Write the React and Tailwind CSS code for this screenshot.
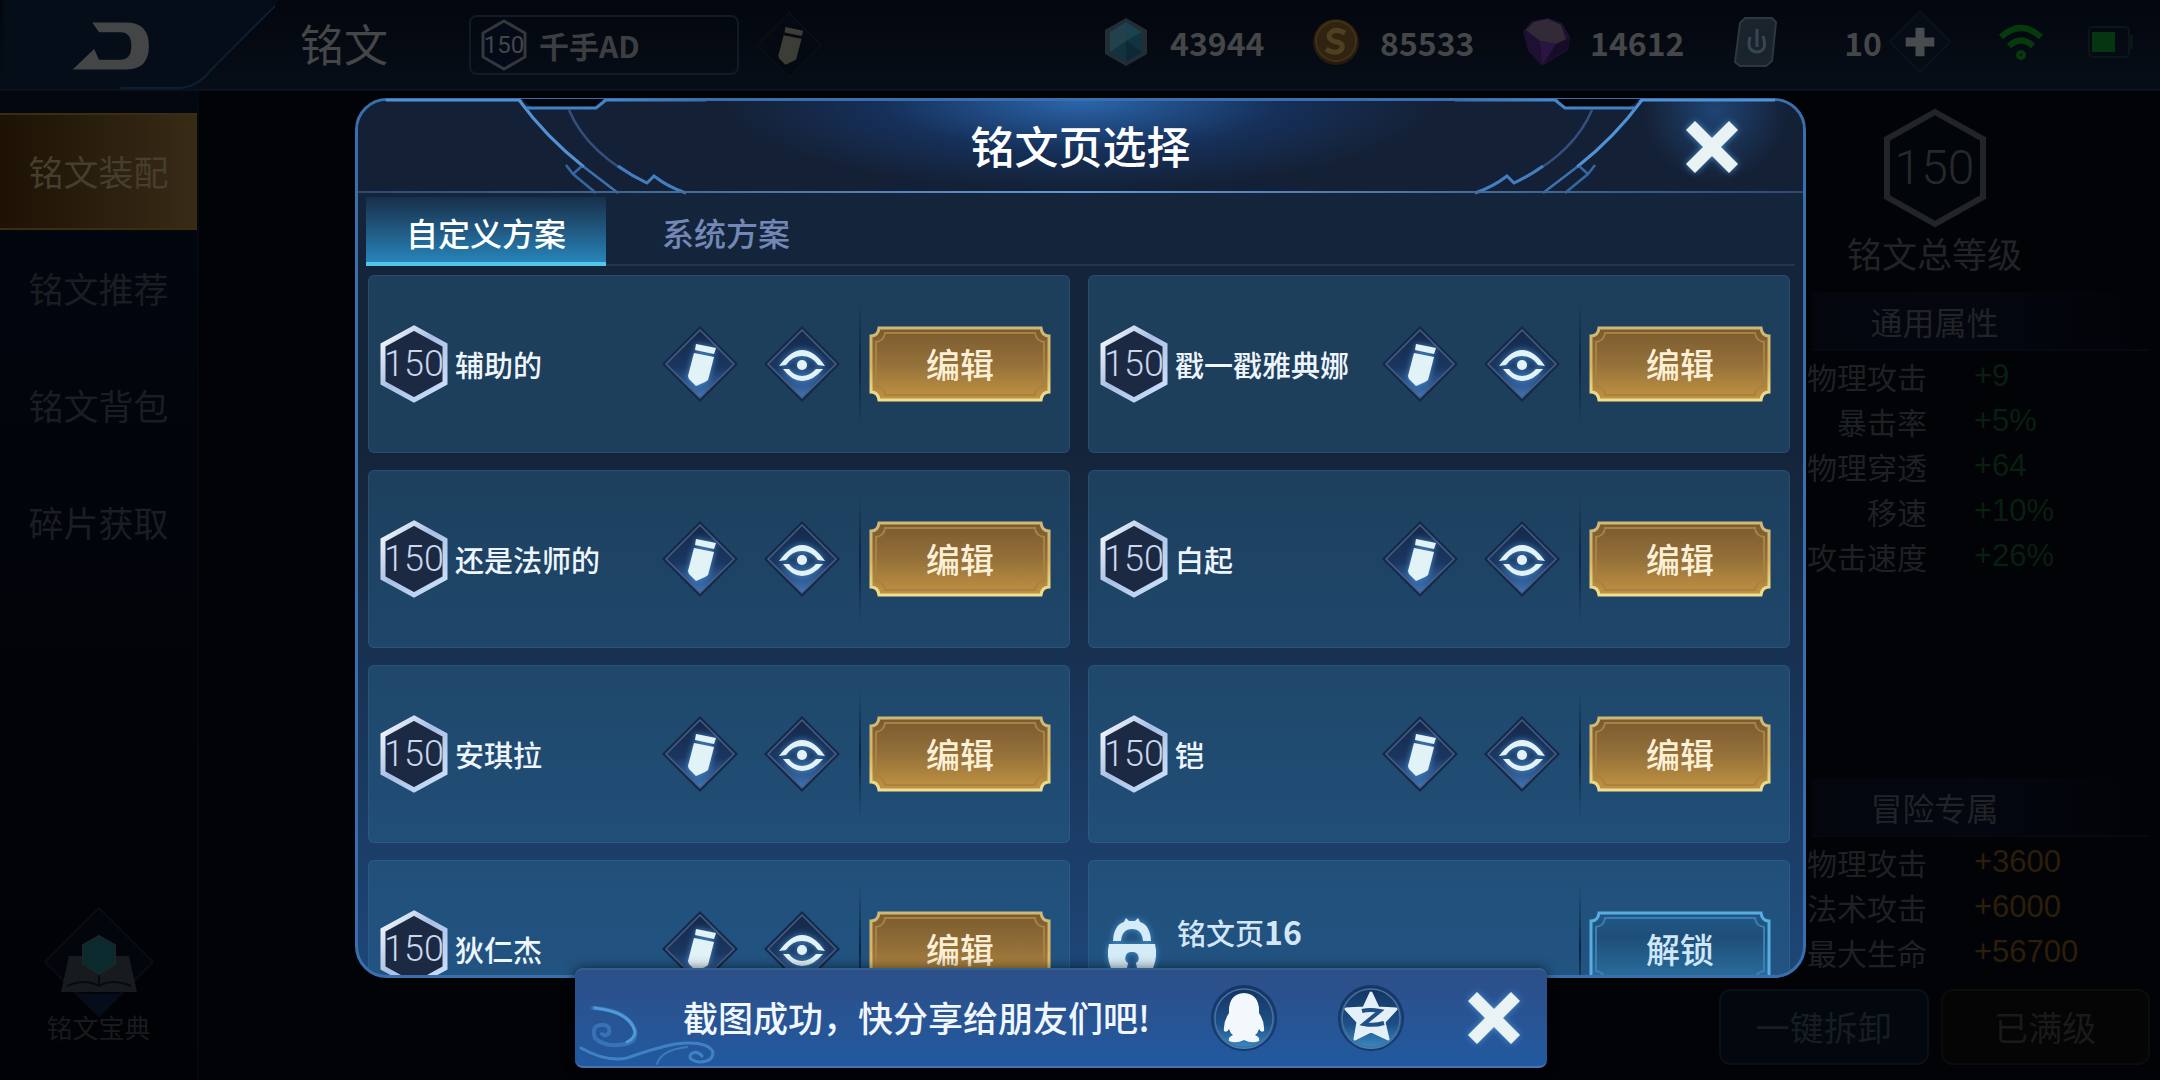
import { useState } from 'react';
import clsx from 'clsx';

const menu = ['铭文装配', '铭文推荐', '铭文背包', '碎片获取'];

const pages = [
  { name: '辅助的' },
  { name: '戳一戳雅典娜' },
  { name: '还是法师的' },
  { name: '白起' },
  { name: '安琪拉' },
  { name: '铠' },
  { name: '狄仁杰' },
  { name: '铭文页', number: 16, locked: true },
];

const tabs = ['自定义方案', '系统方案'];

const common = [
  ['物理攻击', '+9'],
  ['暴击率', '+5%'],
  ['物理穿透', '+64'],
  ['移速', '+10%'],
  ['攻击速度', '+26%'],
];

const adventure = [
  ['物理攻击', '+3600'],
  ['法术攻击', '+6000'],
  ['最大生命', '+56700'],
];

/* ── Shared gradients ── */
const Defs = () => (
  <svg className="absolute w-0 h-0" aria-hidden="true">
    <defs>
      <linearGradient id="gold" x1="0" y1="0" x2="0" y2="1">
        <stop offset="0" stopColor="#7a5a2e" />
        <stop offset="0.5" stopColor="#94703a" />
        <stop offset="1" stopColor="#c29442" />
      </linearGradient>
      <linearGradient id="goldLine" x1="0" y1="0" x2="0" y2="1">
        <stop offset="0" stopColor="#cfb878" />
        <stop offset="0.5" stopColor="#d8b45e" />
        <stop offset="1" stopColor="#f0e08e" />
      </linearGradient>
      <linearGradient id="blue" x1="0" y1="0" x2="0" y2="1">
        <stop offset="0" stopColor="#21578a" />
        <stop offset="0.35" stopColor="#1f4f78" />
        <stop offset="1" stopColor="#2b72a4" />
      </linearGradient>
      <linearGradient id="hexLine" x1="0" y1="0" x2="1" y2="1">
        <stop offset="0" stopColor="#ffffff" />
        <stop offset="0.45" stopColor="#a9bfe4" />
        <stop offset="1" stopColor="#cfe4ff" />
      </linearGradient>
      <linearGradient id="diamond" x1="0" y1="0" x2="0" y2="1">
        <stop offset="0" stopColor="#14294a" />
        <stop offset="0.55" stopColor="#1a3660" />
        <stop offset="1" stopColor="#3f76ba" />
      </linearGradient>
      <linearGradient id="orb" x1="0" y1="0" x2="0" y2="1">
        <stop offset="0" stopColor="#14335f" />
        <stop offset="0.6" stopColor="#1d4f86" />
        <stop offset="1" stopColor="#3c8fc8" />
      </linearGradient>
      <linearGradient id="edge" x1="0" y1="0" x2="1" y2="0">
        <stop offset="0" stopColor="#3f7fc4" />
        <stop offset="0.5" stopColor="#4784c8" />
        <stop offset="1" stopColor="#3a6fae" />
      </linearGradient>
      <filter id="glow" x="-40%" y="-40%" width="180%" height="180%">
        <feDropShadow dx="0" dy="0" stdDeviation="3" floodColor="#4fa3ea" floodOpacity="0.8" />
      </filter>
    </defs>
  </svg>
);

const PencilShape = () => (
  <>
    <path d="M34 18 54 22 52 28 33 24Z" />
    <path d="M32 27 52 31 46 54 43 56 34 60 27 53 26 50Z" />
  </>
);

const EyeShape = () => (
  <>
    <path d="M15 40Q27 24 38 24Q50 24 61 40L54 39Q48 30 38 30Q28 30 22 39Z" />
    <path d="M19 43Q28 55 38 55Q49 55 59 43L52 43Q46 50 38 50Q30 50 25 43Z" />
    <circle cx="38" cy="39" r="5" />
  </>
);

const DiamondButton = ({ label, children }) => (
  <button aria-label={label} className="w-[76px] h-[76px] flex-shrink-0">
    <svg viewBox="0 0 76 76" className="w-full h-full">
      <path d="M38 0 76 38 38 76 0 38Z" fill="#13294a" />
      <path d="M38 4 72 38 38 72 4 38Z" fill="url(#diamond)" stroke="#4a5c80" strokeWidth="1.5" />
      <g fill="#e2f3f8" filter="url(#glow)">{children}</g>
    </svg>
  </button>
);

const LevelBadge = () => (
  <div className="relative w-[70px] h-[78px] flex-shrink-0 flex items-center justify-center">
    <svg viewBox="0 0 70 78" className="absolute inset-0 w-full h-full">
      <path d="M35 3 66 20V58L35 75 4 58V20Z" fill="#1b2a42" stroke="url(#hexLine)" strokeWidth="5" />
    </svg>
    <span className="relative font-['Roboto'] font-light text-[36px] leading-none text-[#c9d6ee]">150</span>
  </div>
);

/* ── Framed action button with scooped corners ── */
const FrameButton = ({ blue, children }) => (
  <button
    className={clsx(
      'relative w-[182px] h-[76px] flex-shrink-0 text-[34px] leading-none font-medium',
      blue ? 'text-[#cfe6fb]' : 'text-[#fdf0d6]',
    )}
  >
    <svg viewBox="0 0 182 76" className="absolute inset-0 w-full h-full">
      <path
        d="M10 2H172Q173 10 180 10V66Q173 66 172 74H10Q9 66 2 66V10Q9 10 10 2Z"
        fill={blue ? 'url(#blue)' : 'url(#gold)'}
        stroke={blue ? '#58aee0' : 'url(#goldLine)'}
        strokeWidth="3"
      />
      <path
        d="M16 7H166Q167 15 175 16V60Q167 61 166 69H16Q15 61 7 60V16Q15 15 16 7Z"
        fill="none"
        stroke={blue ? '#3b7fae' : '#a98243'}
        strokeWidth="2"
      />
    </svg>
    <span className="relative">{children}</span>
  </button>
);

const LockIcon = () => (
  <svg viewBox="0 0 50 66" className="w-[50px] h-[66px] flex-shrink-0 overflow-visible">
    <g fill="#d5ebf8" filter="url(#glow)">
      <path d="M6 23Q7 7 17 4L19 0 22 3H28L31 0 33 4Q43 7 44 23H36Q35 11 25 11Q15 11 14 23Z" />
      <path
        fillRule="evenodd"
        d="M2 26H48Q51 38 46 50L36 62H14L4 50Q-1 38 2 26ZM25 34A6 6 0 0 0 21 45L19 54H31L29 45A6 6 0 0 0 25 34Z"
      />
    </g>
  </svg>
);

const PageCard = ({ page }) => (
  <li className="h-[178px] flex items-center pl-[10px] pr-[18px] rounded-md border border-[#4c8cb8]/20 bg-[#2b6890]/40">
    {page.locked ? (
      <>
        <div className="pl-2 pr-5 pt-1"><LockIcon /></div>
        <span className="flex-1 pb-9 text-[29px] font-medium leading-none text-[#d4e7fa]">
          {page.name}
          <b className="text-[32px] leading-none">{page.number}</b>
        </span>
      </>
    ) : (
      <>
        <LevelBadge />
        <span className="flex-1 pl-[6px] text-[29px] leading-none font-medium text-[#eef5fd] whitespace-nowrap">{page.name}</span>
        <div className="flex gap-[26px] pr-[19px]">
          <DiamondButton label="重命名"><PencilShape /></DiamondButton>
          <DiamondButton label="预览"><EyeShape /></DiamondButton>
        </div>
      </>
    )}
    <div className="w-[2px] h-32 mr-2 bg-gradient-to-b from-transparent via-[#0f2440] to-transparent" />
    <FrameButton blue={page.locked}>{page.locked ? '解锁' : '编辑'}</FrameButton>
  </li>
);

/* ── Line work at either end of the dialog header ── */
const HeaderWing = ({ flip }) => (
  <svg
    viewBox="0 0 350 96"
    className={clsx('absolute -top-[2px] w-[350px] h-[96px]', flip ? '-right-[2px] -scale-x-100' : '-left-[2px]')}
    fill="none"
  >
    <path d="M163 -1 176 8H240L249 -1Z" fill="#04070e" />
    <path d="M30 1H163Q190 38 228 68" stroke="#5292d4" strokeWidth="3" />
    <path d="M170 9H240L250 1H350" stroke="url(#edge)" strokeWidth="3" />
    <path d="M228 68 262 94" stroke="#3d72b0" strokeWidth="2.5" />
    <path d="M210 66 217 75 240 94M217 75 226 67" stroke="#3567a3" strokeWidth="2.5" />
    <path d="M213 11Q232 56 291 84" stroke="#33507c" strokeWidth="2.5" />
    <path d="M262 67Q276 77 291 84L298 77Q312 88 330 94" stroke="#437fc0" strokeWidth="3" />
  </svg>
);

const CloseIcon = () => (
  <svg viewBox="0 0 52 52" className="w-[52px] h-[52px] overflow-visible">
    <path
      d="M9 0 26 17 43 0 52 9 35 26 52 43 43 52 26 35 9 52 0 43 17 26 0 9Z"
      fill="#e9f3f3"
      filter="url(#glow)"
    />
  </svg>
);

const PageDialog = () => {
  const [tab, setTab] = useState(0);

  return (
    <section
      role="dialog"
      aria-label="铭文页选择"
      className="relative flex-1 min-h-0 flex flex-col rounded-[32px] border-[3px] border-[#3a6fae] bg-gradient-to-b from-[#14243a] from-40% to-[#1d4678]"
    >
      <header className="relative h-[92px] flex-shrink-0 flex items-center justify-center rounded-t-[29px] bg-[radial-gradient(ellipse_360px_90px_at_50%_0%,#2b66ac,#16305a_55%,#142035)]">
        <div className="absolute right-0 inset-y-0 w-[160px] rounded-tr-[29px] bg-[radial-gradient(circle_at_45%_10%,#1f4473,transparent_60%)]" />
        <HeaderWing />
        <HeaderWing flip />
        <h2 className="relative pb-1 text-[44px] leading-none font-medium text-white">铭文页选择</h2>
        <button aria-label="关闭" className="absolute right-[65px] top-5"><CloseIcon /></button>
        <div className="absolute inset-x-0 bottom-0 h-[2px] bg-gradient-to-r from-[#2f4a70] via-[#5f9bd6] to-[#2f4a70]" />
      </header>

      <div role="tablist" className="flex h-[73px] mx-2 pt-1 flex-shrink-0 border-b-2 border-[#22364e]">
        {tabs.map((name, i) => (
          <button
            key={name}
            role="tab"
            aria-selected={tab === i}
            onClick={() => setTab(i)}
            className={clsx(
              'w-[240px] -mb-[2px] pt-1 border-b-4 text-[32px] leading-none font-medium',
              tab === i
                ? 'border-[#52c6e6] text-white bg-gradient-to-b from-[#17304b] to-[#2684ba]'
                : 'border-transparent text-[#7388b6]',
            )}
          >
            {name}
          </button>
        ))}
      </div>

      <ul className="flex-1 min-h-0 overflow-hidden grid grid-cols-2 auto-rows-max gap-x-[18px] gap-y-[17px] pt-[9px] px-[10px] pr-[13px] rounded-b-[29px]">
        {pages.map((page) => <PageCard key={page.name} page={page} />)}
      </ul>
    </section>
  );
};

const ShareToast = () => (
  <div
    role="status"
    className="absolute bottom-3 inset-x-0 mx-auto w-[972px] h-[100px] pl-[108px] pr-[27px] flex items-center rounded-lg border-y-2 border-t-[#2f6092] border-b-[#4b74ae] bg-gradient-to-b from-[#2d4f88] to-[#21599f] shadow-[0_0_12px_rgba(0,0,0,0.6)] -translate-x-[19px]"
  >
    <svg viewBox="0 0 150 66" className="absolute left-0 bottom-0 w-[150px] h-[66px]" fill="none" strokeLinecap="round">
      <path d="M18 8Q52 10 60 30Q62 42 50 44Q30 48 20 38Q16 26 26 25Q36 24 34 33Q31 37 27 34" stroke="#4187cb" strokeWidth="4" opacity=".6" />
      <path d="M20 8Q56 12 60 32Q60 38 52 42" stroke="#4f9ad8" strokeWidth="3" />
      <path d="M6 48Q30 62 52 58Q80 48 100 44Q132 40 138 52Q138 62 124 62Q112 60 116 54Q122 50 127 56" stroke="#4c94d6" strokeWidth="3" opacity=".7" />
      <path d="M82 64Q86 50 112 47" stroke="#4c94d6" strokeWidth="2" opacity=".6" />
    </svg>
    <p className="flex-1 pb-1 text-[35px] leading-none font-medium text-[#f1f7ff] whitespace-nowrap">截图成功，快分享给朋友们吧!</p>
    <button aria-label="QQ" className="w-[66px] h-[66px]">
      <svg viewBox="0 0 66 66" className="w-full h-full">
        <circle cx="33" cy="33" r="32" fill="url(#orb)" stroke="#17386a" strokeWidth="2" />
        <circle cx="33" cy="33" r="29" fill="none" stroke="#4c6f9c" strokeWidth="1.5" />
        <path
          fill="#f2f8fb"
          d="M33 8Q49 9 48 28Q54 37 53 46Q50 48 48 44Q47 48 44 50Q49 52 48 56Q41 59 33 55Q25 59 18 56Q17 52 22 50Q19 48 18 44Q16 48 13 46Q12 37 18 28Q17 9 33 8Z"
        />
      </svg>
    </button>
    <button aria-label="QQ空间" className="w-[66px] h-[66px] ml-[61px]">
      <svg viewBox="0 0 66 66" className="w-full h-full">
        <circle cx="33" cy="33" r="32" fill="url(#orb)" stroke="#17386a" strokeWidth="2" />
        <circle cx="33" cy="33" r="29" fill="none" stroke="#4c6f9c" strokeWidth="1.5" />
        <path
          fill="#e4f0f7"
          stroke="#e4f0f7"
          strokeWidth="3"
          strokeLinejoin="round"
          d="M33 8 40 23 58 24 46 37 50 54 33 46 17 54 20 37 8 24 26 23Z"
        />
        <path d="M24 26Q32 24 42 26L26 39Q36 41 46 38" fill="none" stroke="#1e4f86" strokeWidth="4" />
      </svg>
    </button>
    <button aria-label="关闭" className="ml-16"><CloseIcon /></button>
  </div>
);

/* ── Currency icons ── */
const CrystalIcon = () => (
  <svg viewBox="0 0 48 50" className="w-12 h-[50px]">
    <path d="M24 1 45 13V37L24 49 3 37V13Z" fill="#222d34" />
    <path d="M24 5 40 15V35L24 45 8 35V15Z" fill="#12323e" />
    <path d="M24 5 40 15 24 24Z" fill="#1a414f" />
    <path d="M24 5V24L8 35V15Z" fill="#23414b" />
    <path d="M24 24 40 35 24 45Z" fill="#0d2936" />
  </svg>
);

const CoinIcon = () => (
  <svg viewBox="0 0 48 50" className="w-12 h-[50px]">
    <circle cx="24" cy="25" r="23" fill="#261b0d" />
    <circle cx="24" cy="24" r="20" fill="#302411" stroke="#403118" strokeWidth="2" />
    <path d="M33 16Q22 10 17 18Q17 24 25 25Q33 27 29 33Q23 38 14 32" fill="none" stroke="#4e4023" strokeWidth="5" />
  </svg>
);

const GemIcon = () => (
  <svg viewBox="0 0 48 50" className="w-12 h-[50px]">
    <path d="M1 14 10 4 26 1 40 6 48 20 46 33 20 49 6 34Z" fill="#1e1032" />
    <path d="M4 13 12 5 26 2 39 8 44 22 34 27 18 24Z" fill="#322a37" />
    <path d="M18 24 34 27 20 48Z" fill="#2a1542" />
    <path d="M34 27 47 22 45 32 24 45Z" fill="#170c27" />
  </svg>
);

const CardIcon = () => (
  <svg viewBox="0 0 48 50" className="w-12 h-[50px]">
    <path d="M13 1H40L44 5 40 44 34 49H8L3 45 8 6Z" fill="#1b242d" stroke="#2d3741" strokeWidth="2" />
    <path d="M15 7H38L35 40H11Z" fill="#18232d" />
    <path d="M25 12V30M18 20Q14 34 25 35Q36 34 31 19" fill="none" stroke="#394550" strokeWidth="3" />
  </svg>
);

const wallet = [
  { value: '43944', Icon: CrystalIcon },
  { value: '85533', Icon: CoinIcon },
  { value: '14612', Icon: GemIcon },
];

const TopBar = () => (
  <header className="relative h-[91px] flex-shrink-0 flex items-center border-b-2 border-[#0a121d] bg-gradient-to-b from-[#03060d] to-[#070e18] text-[#444648]">
    <button aria-label="返回" className="h-full w-[290px]">
      <svg viewBox="0 0 290 91" className="w-full h-full">
        <path d="M0 0H282L212 72Q198 90 178 90H0Z" fill="#040d18" />
        <path d="M278 6 212 72Q198 90 178 90H120" fill="none" stroke="#0e1f32" strokeWidth="2" />
        <path
          d="M91 23H126Q149 23 149 47T126 71H71L93 50 98 61H120Q131 61 131 47T120 33H98Z"
          fill="#444547"
        />
      </svg>
    </button>
    <h1 className="ml-[10px] pb-1 text-[44px] leading-none">铭文</h1>
    <button className="ml-[81px] w-[270px] h-[60px] pl-[10px] flex items-center gap-3 rounded-lg border-2 border-[#121a25]">
      <span className="relative w-[46px] h-[52px] flex items-center justify-center">
        <svg viewBox="0 0 46 52" className="absolute inset-0 w-full h-full">
          <path d="M23 2 44 14V38L23 50 2 38V14Z" fill="#050a18" stroke="#34383c" strokeWidth="3" />
        </svg>
        <span className="relative font-['Roboto'] text-[24px] leading-none">150</span>
      </span>
      <span className="text-[30px] leading-none font-bold text-[#3c3e41]">千手AD</span>
    </button>
    <button aria-label="重命名" className="ml-[16px] w-[68px] h-[68px]">
      <svg viewBox="0 0 76 76" className="w-full h-full">
        <path d="M38 2 74 38 38 74 2 38Z" fill="#050a12" stroke="#0a0f17" strokeWidth="2" />
        <g fill="#3c3d36"><PencilShape /></g>
      </svg>
    </button>

    <div className="ml-auto pr-[26px] pb-[6px] flex items-center text-[32px] leading-none font-bold">
      {wallet.map(({ value, Icon }) => (
        <div key={value} className="w-[210px] flex items-center gap-5">
          <Icon />
          <span>{value}</span>
        </div>
      ))}
      <div className="w-[150px] flex items-center justify-between">
        <CardIcon />
        <span>10</span>
      </div>
      <button aria-label="增加" className="w-[76px] h-[68px] flex justify-center">
        <svg viewBox="0 0 76 76" className="w-full h-full">
          <path d="M38 4 72 38 38 72 4 38Z" fill="#060c16" stroke="#0c131c" strokeWidth="2" />
          <path d="M33 22H43V33H54V43H43V54H33V43H22V33H33Z" fill="#494c4e" />
        </svg>
      </button>
      <svg viewBox="0 0 46 36" className="ml-10 w-[46px] h-9" fill="none" stroke="#063a0c" strokeWidth="6">
        <path d="M3 13Q23 -5 43 13" />
        <path d="M11 22Q23 11 35 22" />
        <circle cx="23" cy="31" r="2" />
      </svg>
      <svg viewBox="0 0 46 32" className="ml-[44px] w-[46px] h-8">
        <rect x="1" y="1" width="40" height="30" rx="4" fill="none" stroke="#0a1617" strokeWidth="2" />
        <rect x="4" y="6" width="23" height="20" fill="#063512" />
        <rect x="42" y="9" width="3" height="14" fill="#0a1617" />
      </svg>
    </div>
  </header>
);

const SideNav = () => (
  <nav className="w-[199px] flex-shrink-0 pt-[22px] pb-10 flex flex-col border-r-2 border-[#04090f] bg-gradient-to-b from-[#020710] to-[#010205]">
    {menu.map((name, i) => (
      <a
        key={name}
        href="#"
        className={clsx(
          'h-[117px] pb-[2px] flex items-center justify-center text-[35px] leading-none',
          i === 0
            ? 'text-[#463e2e] border-y-2 border-[#3c2d10] bg-gradient-to-r from-[#1d1205] to-[#382b16]'
            : 'text-[#1a1e22]',
        )}
      >
        {name}
      </a>
    ))}
    <a href="#" className="mt-auto flex flex-col items-center text-[26px] leading-none text-[#181b1e]">
      <svg viewBox="0 0 112 112" className="-mb-1 w-28 h-28">
        <path d="M56 2 110 56 56 110 2 56Z" fill="#02060c" stroke="#090d12" strokeWidth="2" />
        <path d="M34 88H78L56 110Z" fill="#040d19" />
        <path d="M26 50H86L94 86H18Z" fill="#181b1e" />
        <path d="M24 80Q42 72 56 80Q70 72 88 80M56 50V80" fill="none" stroke="#070b10" strokeWidth="2" />
        <path d="M56 30 72 39V58L56 68 40 58V39Z" fill="#0a2a2d" stroke="#1a2629" strokeWidth="2" />
      </svg>
      <span>铭文宝典</span>
    </a>
  </nav>
);

const StatList = ({ title, rows, valueClass }) => (
  <section>
    <h3 className="h-[59px] ml-[93px] pr-[93px] flex items-center justify-center text-[32px] leading-none text-[#202427] border-b-2 border-[#060911] bg-gradient-to-r from-[#03060d] via-[#040710] to-transparent">
      {title}
    </h3>
    <dl className="pt-[2px]">
      {rows.map(([label, value]) => (
        <div key={label} className="h-[45px] flex items-center text-[30px] leading-none">
          <dt className="w-[208px] text-right text-[#1d2124]">{label}</dt>
          <dd className={clsx("pl-[47px] font-['Liberation_Sans'] text-[31px]", valueClass)}>{value}</dd>
        </div>
      ))}
    </dl>
  </section>
);

const StatsPanel = () => (
  <aside className="w-[441px] flex-shrink-0 pr-[10px] pt-[17px] pb-[15px] flex flex-col">
    <div className="flex flex-col items-center">
      <div className="relative w-[104px] h-[120px] flex items-center justify-center">
        <svg viewBox="0 0 104 120" className="absolute inset-0 w-full h-full">
          <path d="M52 4 100 31V89L52 116 4 89V31Z" fill="#02050a" stroke="#222528" strokeWidth="6" />
        </svg>
        <span className="relative font-['Roboto'] font-light text-[48px] leading-none text-[#26292c]">150</span>
      </div>
      <p className="mt-[7px] text-[35px] leading-none text-[#212427]">铭文总等级</p>
    </div>
    <div className="pt-[22px] flex-1 flex flex-col justify-between">
      <StatList title="通用属性" rows={common} valueClass="text-[#091f10]" />
      <StatList title="冒险专属" rows={adventure} valueClass="text-[#2c1e09]" />
    </div>
    <div className="pt-[15px] flex gap-3">
      <button className="flex-1 h-[76px] rounded-xl border-2 border-[#091118] bg-[#03080f] text-[34px] leading-none text-[#171d23]">一键拆卸</button>
      <button className="flex-1 h-[76px] rounded-xl border-2 border-[#0c0d0b] bg-[#050505] text-[34px] leading-none text-[#1a1a18]">已满级</button>
    </div>
  </aside>
);

const App = () => (
  <div className="relative h-screen overflow-hidden bg-[#010307] font-['Noto_Sans_CJK_SC',sans-serif]">
    <Defs />
    <div className="h-full flex flex-col">
      <TopBar />
      <div className="flex-1 min-h-0 flex justify-between">
        <SideNav />
        <StatsPanel />
      </div>
    </div>
    <div className="absolute inset-0 flex flex-col pt-[98px] pb-[102px] pl-[355px] pr-[354px]">
      <PageDialog />
    </div>
    <ShareToast />
  </div>
);

export default App;
